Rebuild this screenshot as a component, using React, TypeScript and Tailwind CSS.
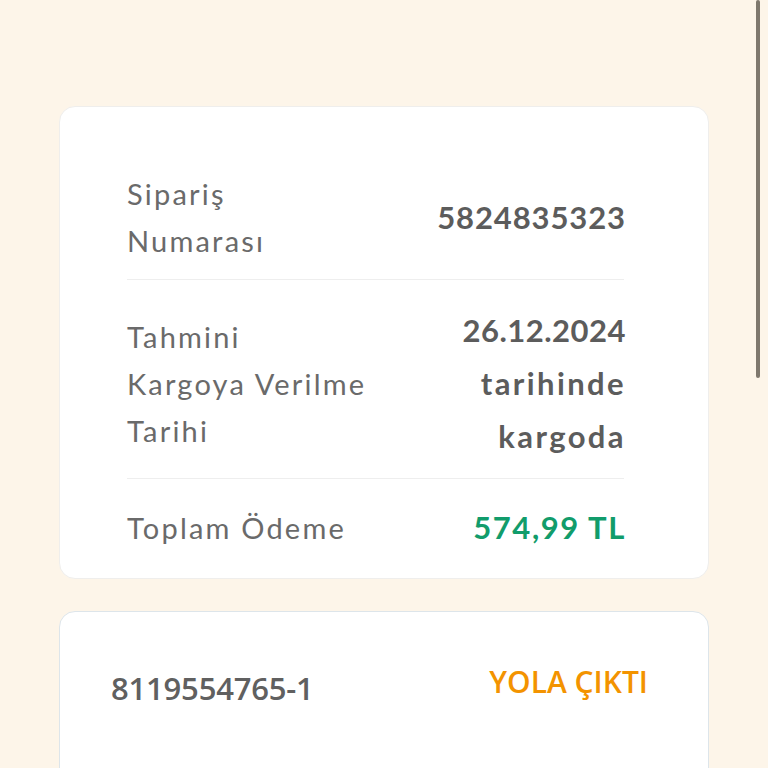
import React from "react";

const label = "text-[29px] leading-[47px] text-[#6a6a6a] tracking-[2.2px]";
const value = "text-[31px] leading-[53px] font-bold text-[#5c5c5c] text-right";

export default function App() {
  return (
    <div
      className="relative w-[768px] h-[768px] overflow-hidden bg-[#fdf5e9]"
      style={{ fontFamily: "Lato, 'Open Sans', sans-serif" }}
    >
      <div className="px-[59px] pt-[106px] flex flex-col gap-[32px]">
        <div className="bg-white rounded-[16px] border border-[#efeeec] pl-[67px] pr-[82px] pt-[39px] pb-[24px] flex flex-col">
          <div className="flex items-center justify-between pt-[24px] pb-[15px] border-b border-[#eeeeee] mr-[2px]">
            <div className={label}>
              <div>Sipariş</div>
              <div>Numarası</div>
            </div>
            <div className={`${value} tracking-[0.9px] -mr-[2px]`}>5824835323</div>
          </div>
          <div className="flex items-center justify-between pt-[24px] pb-[15px] border-b border-[#eeeeee] mr-[2px]">
            <div className={label}>
              <div>Tahmini</div>
              <div>Kargoya Verilme</div>
              <div>Tarihi</div>
            </div>
            <div className={`${value} -mr-[2px]`}>
              <div className="tracking-[0.5px]">26.12.2024</div>
              <div className="tracking-[2.4px]">tarihinde</div>
              <div className="tracking-[2.4px]">kargoda</div>
            </div>
          </div>
          <div className="flex items-center justify-between pt-[22px]">
            <div className={label}>Toplam Ödeme</div>
            <div className="text-[31px] leading-[53px] font-bold text-[#119c6b] tracking-[1.6px]">574,99 TL</div>
          </div>
        </div>
        <div
          className="bg-white rounded-t-[16px] border border-[#dde5ea] h-[200px] pl-[51px] pr-[60px] pt-[48px] flex justify-between items-start"
          style={{ fontFamily: "'Open Sans', sans-serif" }}
        >
          <div className="text-[31px] leading-[56px] font-semibold text-[#606060] tracking-[-0.2px]">8119554765-1</div>
          <div className="text-[30px] leading-[44px] font-semibold text-[#f39300]">YOLA ÇIKTI</div>
        </div>
      </div>
      <div className="absolute left-[756px] top-0 w-[4px] h-[378px] rounded-full bg-[#7f786d]" />
    </div>
  );
}
